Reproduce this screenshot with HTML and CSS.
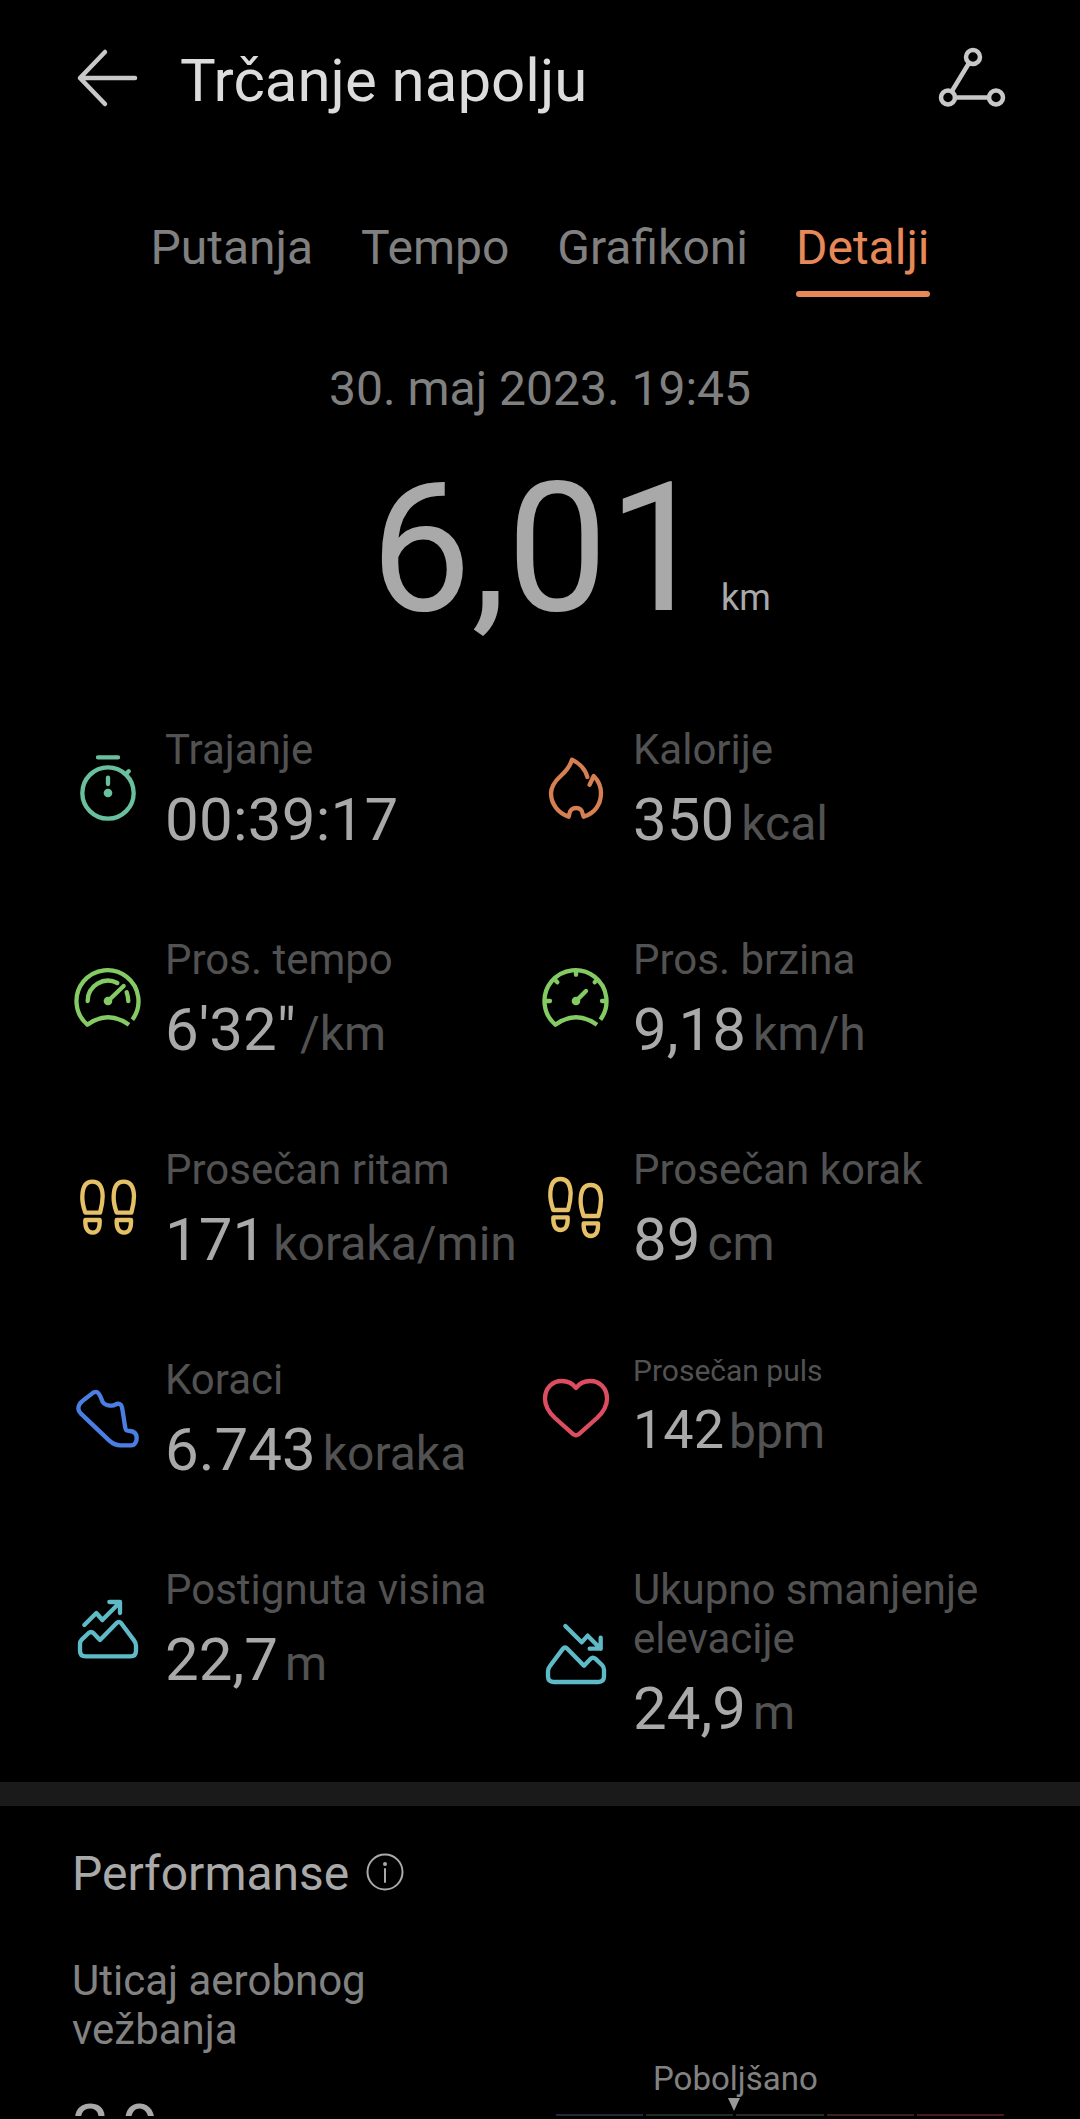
FILE: index.html
```html
<!DOCTYPE html>
<html lang="sr-Latn">
<head>
  <meta charset="UTF-8" />
  <meta name="viewport" content="width=device-width, initial-scale=1.0" />
  <title>Trčanje napolju</title>
  <link rel="stylesheet" href="styles.css">
</head>
<body>
  <div class="ekran">

  <header>
    <svg class="nazad" viewBox="0 0 72 72" aria-label="Nazad">
      <path d="M33 10L8 36L33 62M8 36H63" />
    </svg>
    <h1>Trčanje napolju</h1>
    <svg class="ruta" viewBox="0 0 72 72" aria-label="Ruta">
      <circle cx="37" cy="15" r="7" />
      <circle cx="12" cy="55.500" r="7" />
      <circle cx="60" cy="55.500" r="7" />
      <path d="M33 21L16 49M19 55.500H53" />
    </svg>
  </header>

  <nav>
    <a>Putanja</a>
    <a>Tempo</a>
    <a>Grafikoni</a>
    <a class="active">Detalji</a>
  </nav>

  <p class="datum">30. maj 2023. 19:45</p>
  <div class="distanca"><span class="broj">6,01</span><span class="km">km</span></div>

  <section class="podaci">
    <div class="stavka">
      <svg class="ikona zelena" viewBox="0 0 216 216">
        <circle cx="108" cy="117" r="77" />
        <path d="M78 10H138M162 60L170 52M108 71V90" />
        <circle class="tacka" cx="108" cy="117" r="13" />
      </svg>
      <div>
        <h2>Trajanje</h2>
        <p class="vrednost vreme">00:39:17</p>
      </div>
    </div>

    <div class="stavka">
      <svg class="ikona narandzasta" viewBox="0 0 216 216">
        <path d="M142 69C136 45 116 26 96 17C90 38 80 50 62 66C40 86 33 100 33 118C33 150 55 178 86 188L88 180C90 156 127 156 128 180L131 188C165 178 183 150 183 117C183 97 175 80 161 66L149 92" />
      </svg>
      <div>
        <h2>Kalorije</h2>
        <p class="vrednost">350<span>kcal</span></p>
      </div>
    </div>

    <div class="stavka">
      <svg class="ikona svetla" viewBox="0 0 216 216">
        <path class="ravno" d="M181 167A93 93 0 1 0 46 182Q108 138 171 182" />
        <path d="M47 111A61 61 0 0 1 136 57M108 111L155 66M164 85Q168 96 169 111" />
        <circle class="tacka" cx="108" cy="111" r="13" />
      </svg>
      <div>
        <h2>Pros. tempo</h2>
        <p class="vrednost tempo">6'32"<span>/km</span></p>
      </div>
    </div>

    <div class="stavka">
      <svg class="ikona svetla" viewBox="0 0 216 216">
        <path class="ravno" d="M181 167A93 93 0 1 0 46 182Q108 138 171 182" />
        <path d="M108 20V32M46 49L52 55M170 49L164 55M18 111H30M198 111H186M108 111L138 81" />
        <circle class="tacka" cx="108" cy="111" r="13" />
      </svg>
      <div>
        <h2>Pros. brzina</h2>
        <p class="vrednost">9,18<span>km/h</span></p>
      </div>
    </div>

    <div class="stavka">
      <svg class="ikona zuta" viewBox="0 0 216 216">
        <g id="stopalo">
          <path d="M40 116C34 98 30 88 31 66C32 38 42 23 61 23C80 23 91 38 92 66C92 88 89 98 84 116Z" />
          <path d="M40 138H83C84 160 79 176 62 176C45 176 39 160 40 138Z" />
        </g>
        <use href="#stopalo" x="94" />
      </svg>
      <div>
        <h2>Prosečan ritam</h2>
        <p class="vrednost">171<span>koraka/min</span></p>
      </div>
    </div>

    <div class="stavka">
      <svg class="ikona zuta" viewBox="0 0 216 216">
        <use href="#stopalo" y="-8" />
        <use href="#stopalo" x="91" y="10" />
      </svg>
      <div>
        <h2>Prosečan korak</h2>
        <p class="vrednost">89<span>cm</span></p>
      </div>
    </div>

    <div class="stavka">
      <svg class="ikona plava" viewBox="0 0 216 216">
        <path d="M74 24C68 22 62 26 56 32C44 42 30 50 23 60C16 72 18 80 26 88L112 170C124 181 134 184 146 184H178C188 184 195 172 194 160C193 146 184 142 174 141C164 141 162 140 160 132C156 110 154 90 150 70C148 60 140 56 130 62C120 68 98 64 92 54C86 40 84 28 74 24Z" />
      </svg>
      <div>
        <h2>Koraci</h2>
        <p class="vrednost">6.743<span>koraka</span></p>
      </div>
    </div>

    <div class="stavka puls">
      <svg class="ikona crvena" viewBox="0 0 216 216">
        <path d="M108 48C98 34 82 27 65 27C36 27 15 50 15 80C15 105 28 122 45 138L100 187Q108 193 116 187L171 138C188 122 201 105 201 80C201 50 180 27 151 27C134 27 118 34 108 48Z" />
      </svg>
      <div>
        <h2>Prosečan puls</h2>
        <p class="vrednost">142<span>bpm</span></p>
      </div>
    </div>

    <div class="stavka">
      <svg class="ikona tirkizna" viewBox="0 0 216 216">
        <path d="M37 93L73 57L91 78L144 25M112 24H144V57" />
        <path id="planina" d="M24 150Q24 142 30 136L50 117Q57 111 64 117L84 138L134 87Q141 80 147 87L186 139Q192 147 192 155V170Q192 187 175 187H41Q24 187 24 170Z" />
      </svg>
      <div>
        <h2>Postignuta visina</h2>
        <p class="vrednost">22,7<span>m</span></p>
      </div>
    </div>

    <div class="stavka">
      <svg class="ikona tirkizna" viewBox="0 0 216 216">
        <path d="M76 21L125 70L143 50L182 89M149 89H182V56" />
        <use href="#planina" transform="translate(216 2) scale(-1 1)" />
      </svg>
      <div>
        <h2>Ukupno smanjenje elevacije</h2>
        <p class="vrednost">24,9<span>m</span></p>
      </div>
    </div>
  </section>

  <section class="performanse">
    <div class="naslov">
      <h3>Performanse</h3>
      <svg viewBox="0 0 40 40" aria-label="Informacije">
        <circle cx="20" cy="20" r="17.500" />
        <path d="M20 17V30" />
        <circle class="tacka" cx="20" cy="12" r="2" />
      </svg>
    </div>
    <div class="efekat">
      <div class="opis">
        <p>Uticaj aerobnog vežbanja</p>
        <p class="ocena">2,9</p>
      </div>
      <div class="skala">
        <p>Poboljšano</p>
        <i class="strelica"></i>
        <div class="trake">
          <i></i><i></i><i></i><i></i><i></i>
        </div>
      </div>
    </div>
  </section>

  </div>
</body>
</html>
```

FILE: styles.css
```css
body {
  margin: 0;
  font-family: Roboto, sans-serif;
  background: #000;
  color: #a9a9a9;
}

h1, h2, h3, p {
  margin: 0;
  font-weight: 400;
}

svg {
  display: block;
  flex: none;
  fill: none;
  stroke: currentColor;
  stroke-linecap: round;
  stroke-linejoin: round;
}

.tacka {
  fill: currentColor;
  stroke: none;
}

.ekran {
  height: 2116px;
  overflow: hidden;
}

header {
  display: flex;
  align-items: center;
  height: 156px;
  padding: 0 72px;
  color: #dcdcdc;
}

header h1 {
  flex: 1;
  margin-left: 36px;
  padding-top: 5px;
  font-size: 60px;
  line-height: 70px;
}

header svg {
  width: 72px;
  height: 72px;
  stroke-width: 4.5;
  color: #c8c8c8;
}

nav {
  display: flex;
  justify-content: center;
  gap: 48px;
  height: 77px;
  padding-top: 64px;
  font-size: 48px;
  line-height: 56px;
  color: #808080;
}

nav a {
  height: 71px;
}

nav a.active {
  position: relative;
  color: #e78858;
}

nav a.active::after {
  content: "";
  position: absolute;
  left: 0;
  right: 0;
  bottom: -6px;
  height: 6px;
  border-radius: 3px;
  background: #e78858;
}

.datum {
  padding-top: 64px;
  text-align: center;
  font-size: 48px;
  line-height: 56px;
  color: #808080;
}

.distanca {
  display: flex;
  align-items: baseline;
  justify-content: center;
  height: 277px;
  margin-top: 26px;
  padding-left: 61px;
  box-sizing: border-box;
  line-height: 211px;
}

.broj {
  font-size: 180px;
}

.km {
  margin-left: 12px;
  font-size: 36px;
}

.podaci {
  display: grid;
  grid-template-columns: 468px 468px;
  align-content: start;
  row-gap: 80px;
  height: 1057px;
  margin-left: 72px;
  margin-top: 5px;
}

.stavka {
  display: flex;
  align-items: center;
  align-self: start;
  gap: 21px;
}

.stavka h2 {
  font-size: 42px;
  line-height: 49px;
  color: #525252;
}

.vrednost {
  margin-top: 10px;
  font-size: 60px;
  line-height: 71px;
  white-space: nowrap;
}

.vrednost span {
  margin-left: 7px;
  font-size: 48px;
  line-height: 1;
  color: #525252;
}

.vreme {
  letter-spacing: 0.25px;
}

.tempo span {
  margin-left: 4px;
}

.puls {
  margin-top: -2px;
}

.puls h2 {
  font-size: 30px;
  line-height: 35px;
}

.puls .vrednost {
  font-size: 54px;
  line-height: 64px;
}

.puls .vrednost span {
  margin-left: 5px;
}

.ikona {
  width: 72px;
  height: 72px;
  stroke-width: 13;
}

.ravno {
  stroke-linecap: butt;
}

.zelena { color: #69c09f; }
.narandzasta { color: #d67f52; }
.svetla { color: #83cb62; }
.zuta { color: #e5c066; }
.plava { color: #4a7ee2; }
.crvena { color: #dc4d61; }
.tirkizna { color: #5ebac6; }

.performanse {
  border-top: 24px solid #1a1a1a;
  padding-left: 72px;
}

.naslov {
  display: flex;
  align-items: center;
  gap: 16px;
  padding-top: 40px;
}

.naslov h3 {
  font-size: 48px;
  line-height: 56px;
}

.naslov svg {
  width: 40px;
  height: 40px;
  margin-top: -5px;
  stroke-width: 2;
}

.efekat {
  display: flex;
  padding-top: 54px;
}

.opis {
  width: 484px;
}

.opis p {
  width: 320px;
  font-size: 42px;
  line-height: 49px;
  color: #828282;
}

.opis .ocena {
  margin-top: 37px;
  font-size: 66px;
  line-height: 77px;
  color: #a9a9a9;
}

.skala {
  width: 448px;
  padding-top: 104px;
}

.skala p {
  margin-left: 97px;
  font-size: 33px;
  line-height: 38px;
  color: #828282;
}

.strelica {
  display: block;
  width: 12px;
  height: 13px;
  margin-left: 172px;
  background: #999;
  clip-path: polygon(0 0, 100% 0, 50% 100%);
}

.trake {
  display: flex;
  gap: 3px;
  margin-top: 3px;
}

.trake i {
  flex: 1;
  height: 2px;
  background: #24283f;
}

.trake i:nth-child(2) { background: #222c26; }
.trake i:nth-child(3) { background: #282b26; }
.trake i:nth-child(4) { background: #352521; }
.trake i:nth-child(5) { background: #481c1f; }
```
